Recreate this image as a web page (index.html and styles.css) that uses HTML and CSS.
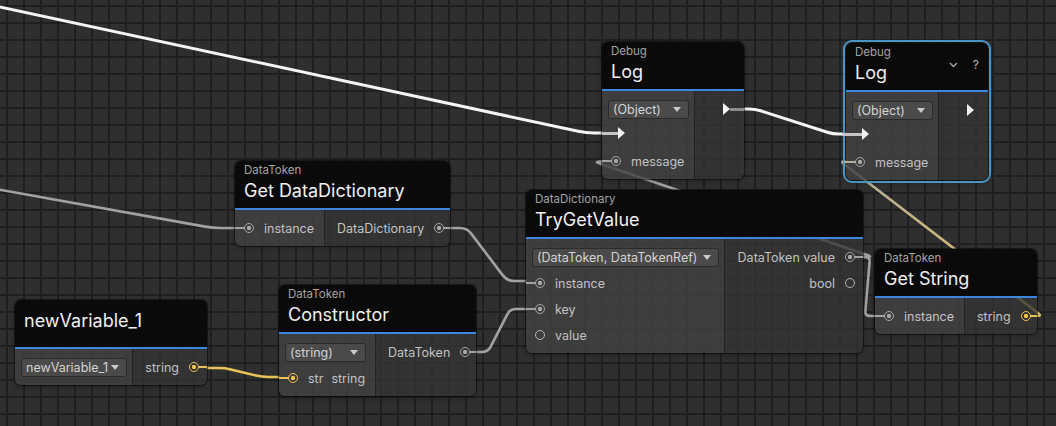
FILE: index.html
```html
<!DOCTYPE html>
<html>
<head>
<meta charset="utf-8">
<link rel="stylesheet" href="styles.css">
</head>
<body>
<div class="canvas">
  <svg class="wires" width="1056" height="426" viewBox="0 0 1056 426">
    <defs>
      <linearGradient id="tan" gradientUnits="userSpaceOnUse" x1="846" y1="161" x2="1042" y2="316">
        <stop offset="0" stop-color="#b1ae9c"/>
        <stop offset="1" stop-color="#e6c35e"/>
      </linearGradient>
    </defs>
    <path class="w-flow" d="M-4,6.1 L578.2,131.3 Q586,133 594,133 L602,133"/>
    <path class="w-flow" d="M744,109 L749,109 Q755,109 760.7,110.8 L827.3,132.2 Q833,134 839,134 L846,134"/>
    <path class="w-gray" d="M-4,189 L205.1,226.6 Q213,228 221,228 L235,228"/>
    <path class="w-gray" d="M450,228 L460,228 Q467,228 471.2,233.6 L502.8,275.4 Q507,281 514,281 L526,281"/>
    <path class="w-gray" d="M476,352 L482,352 Q488,352 490.7,346.7 L507.3,314.3 Q510,309 516,309 L526,309"/>
    <path class="w-yellow" d="M207,368 L219,368 Q225,368 230.8,369.4 L256.2,375.6 Q262,377 268,377 L279,377"/>
    <path class="w-gray" d="M863,257 L867,257 Q873,257 867.3,255.1 L599.7,163.4 Q594,161.5 600,161.5 L602,161.5"/>
    <path class="w-gray" d="M863,257 L865,257 Q870,257 869.6,262 L865.4,311 Q865,316 870,316 L875,316"/>
    <path class="w-tan" d="M846,161 Q840,161 844,164 L1038,313 Q1042,316 1037,316"/>
  </svg>

  <div class="node n-log1">
    <div class="hd">
      <div class="cat">Debug</div>
      <div class="title">Log</div>
    </div>
    <div class="bd">
      <div class="ins">
        <div class="row"><div class="dd dd-81">(Object)</div></div>
        <div class="row p"><span class="fl in ln"><i></i></span></div>
        <div class="row p"><span class="port ln"></span><span class="lbl">message</span></div>
      </div>
      <div class="outs">
        <div class="row"><span class="fl out ln"><i></i></span></div>
      </div>
    </div>
  </div>

  <div class="node n-log2 sel">
    <div class="hd ctl">
      <div class="hd-text">
        <div class="cat">Debug</div>
        <div class="title">Log</div>
      </div>
      <div class="tools">
        <svg class="chev" width="9" height="6" viewBox="0 0 9 6"><polyline points="1,1 4.5,4.5 8,1" fill="none" stroke="#a9a9a9" stroke-width="1.3"/></svg>
        <span class="help">?</span>
      </div>
    </div>
    <div class="bd">
      <div class="ins">
        <div class="row"><div class="dd dd-81">(Object)</div></div>
        <div class="row p"><span class="fl in ln"><i></i></span></div>
        <div class="row p"><span class="port ln tan"></span><span class="lbl">message</span></div>
      </div>
      <div class="outs">
        <div class="row"><span class="fl out"><i></i></span></div>
      </div>
    </div>
  </div>

  <div class="node n-getdict">
    <div class="hd">
      <div class="cat">DataToken</div>
      <div class="title">Get DataDictionary</div>
    </div>
    <div class="bd">
      <div class="ins">
        <div class="row p"><span class="port ln"></span><span class="lbl">instance</span></div>
      </div>
      <div class="outs">
        <div class="row"><span class="lbl">DataDictionary</span><span class="port ln"></span></div>
      </div>
    </div>
  </div>

  <div class="node n-try">
    <div class="hd">
      <div class="cat">DataDictionary</div>
      <div class="title">TryGetValue</div>
    </div>
    <div class="bd">
      <div class="ins">
        <div class="row"><div class="dd dd-187">(DataToken, DataTokenRef)</div></div>
        <div class="row p"><span class="port ln"></span><span class="lbl">instance</span></div>
        <div class="row p"><span class="port ln"></span><span class="lbl">key</span></div>
        <div class="row p"><span class="port empty"></span><span class="lbl">value</span></div>
      </div>
      <div class="outs">
        <div class="row"><span class="lbl">DataToken value</span><span class="port ln"></span></div>
        <div class="row"><span class="lbl">bool</span><span class="port empty"></span></div>
      </div>
    </div>
  </div>

  <div class="node n-getstr">
    <div class="hd">
      <div class="cat">DataToken</div>
      <div class="title">Get String</div>
    </div>
    <div class="bd">
      <div class="ins">
        <div class="row p"><span class="port ln"></span><span class="lbl">instance</span></div>
      </div>
      <div class="outs">
        <div class="row"><span class="lbl">string</span><span class="port y ln"></span></div>
      </div>
    </div>
  </div>

  <div class="node n-newvar">
    <div class="hd solo">
      <div class="title">newVariable_1</div>
    </div>
    <div class="bd">
      <div class="ins">
        <div class="row"><div class="dd dd-106">newVariable_1</div></div>
      </div>
      <div class="outs">
        <div class="row"><span class="lbl">string</span><span class="port y ln"></span></div>
      </div>
    </div>
  </div>

  <div class="node n-ctor">
    <div class="hd">
      <div class="cat">DataToken</div>
      <div class="title">Constructor</div>
    </div>
    <div class="bd">
      <div class="ins">
        <div class="row"><div class="dd dd-81">(string)</div></div>
        <div class="row p"><span class="port y ln"></span><span class="lbl str">str</span><span class="lbl">string</span></div>
      </div>
      <div class="outs">
        <div class="row"><span class="lbl">DataToken</span><span class="port ln"></span></div>
      </div>
    </div>
  </div>
</div>
</body>
</html>
```

FILE: styles.css
```css
html, body {
  margin: 0;
  padding: 0;
  background: #2e2e2e;
}

body {
  font-family: Inter, "Noto Sans", "Liberation Sans", sans-serif;
}

.canvas {
  position: relative;
  width: 1056px;
  height: 426px;
  overflow: hidden;
  background-color: #2f2f2f;
  background-image:
    linear-gradient(90deg, #1f1f1f 2px, transparent 2px),
    linear-gradient(180deg, #1f1f1f 2px, transparent 2px);
  background-size: 17px 17px;
  background-position: 6px 5px;
}

.wires {
  position: absolute;
  left: 0;
  top: 0;
}

.wires path {
  fill: none;
  stroke-linecap: round;
  stroke-linejoin: round;
}

.w-flow { stroke: #f4f4f4; stroke-width: 3; }
.w-gray { stroke: #a2a2a2; stroke-width: 2.6; }
.w-yellow { stroke: #e8c35a; stroke-width: 2.6; }
.w-tan { stroke: url(#tan); stroke-width: 2.6; }

/* nodes */
.node {
  position: absolute;
  border-radius: 6px;
  overflow: hidden;
  box-shadow: 0 0 0 1px rgba(0, 0, 0, 0.45), 0 2px 5px rgba(0, 0, 0, 0.3);
}

.n-log1 { left: 602px; top: 42px; width: 142px; }
.n-log2 { left: 846px; top: 43px; width: 142px; }
.n-getdict { left: 235px; top: 161px; width: 215px; }
.n-try { left: 526px; top: 190px; width: 337px; }
.n-getstr { left: 875px; top: 249px; width: 162px; }
.n-newvar { left: 15px; top: 300px; width: 192px; }
.n-ctor { left: 279px; top: 285px; width: 197px; }

.sel {
  overflow: visible;
  outline: 2px solid #4a94c2;
  outline-offset: 1px;
}

.sel .hd { border-radius: 6px 6px 0 0; }
.sel .ins { border-bottom-left-radius: 6px; }
.sel .outs { border-bottom-right-radius: 6px; }

.hd {
  box-sizing: border-box;
  height: 49px;
  padding: 3px 9px 0 9px;
  background: #0a0a0a;
  border-bottom: 2px solid #3b87de;
}

.hd.solo { padding-top: 7px; }

.hd.ctl {
  display: flex;
  align-items: flex-start;
}

.hd-text { flex: 1; }

.tools {
  display: flex;
  align-items: center;
  gap: 15px;
  height: 14px;
  margin-top: 12px;
}

.chev { display: block; }

.help {
  font-size: 12px;
  line-height: 14px;
  color: #b4b4b4;
}

.cat {
  font-size: 11.5px;
  line-height: 13px;
  color: #a4a4a4;
  white-space: nowrap;
}

.title {
  font-size: 18px;
  line-height: 28px;
  color: #efefef;
  white-space: nowrap;
}

.bd { display: flex; }

.ins {
  flex: none;
  padding: 5px 5px 5px 6px;
  background: rgba(66, 66, 66, 0.82);
}

.outs {
  flex: 1;
  padding: 5px 8px 5px 12px;
  background: rgba(52, 52, 52, 0.78);
  border-left: 1px solid rgba(28, 28, 28, 0.7);
  display: flex;
  flex-direction: column;
  align-items: flex-end;
}

.row {
  height: 26px;
  display: flex;
  align-items: center;
}

.ins .row.p { padding: 0 5px 0 3px; }

.lbl {
  font-size: 12.5px;
  color: #c2c2c2;
  white-space: nowrap;
}

.lbl.str { margin-right: 8px; }

/* ports */
.port {
  position: relative;
  flex: none;
  box-sizing: border-box;
  width: 10px;
  height: 10px;
  border-radius: 50%;
  border: 1.5px solid #a8a8a8;
  background: radial-gradient(circle, #a8a8a8 0 1.9px, transparent 2.5px);
  color: #a2a2a2;
}

.ins .port { margin-right: 10px; }
.outs .port { margin-left: 10px; }

.port.empty { background: none; border-color: #b4b4b4; }

.port.y {
  border-color: #ecc14f;
  background: radial-gradient(circle, #ecc14f 0 1.9px, transparent 2.5px);
  color: #e8c35a;
}

.port.tan { color: #b1ae9c; }

.ins .port.ln::before,
.outs .port.ln::after {
  content: "";
  position: absolute;
  top: calc(50% - 1.3px);
  width: 12px;
  height: 2.6px;
  background: currentColor;
}

.ins .port.ln::before { right: 100%; }
.outs .port.ln::after { left: 100%; }

/* flow arrows */
.fl {
  position: relative;
  display: flex;
}

.fl i {
  display: block;
  width: 7px;
  height: 12px;
  background: #f2f2f2;
  clip-path: polygon(0 0, 100% 50%, 0 100%);
}

.fl.in { margin-left: 7px; margin-top: -4px; }
.fl.out { margin-right: 6px; }

.fl.in.ln::before {
  content: "";
  position: absolute;
  right: 100%;
  top: 4.5px;
  width: 20px;
  height: 3px;
  background: #c6c6c6;
}

.fl.out.ln::after {
  content: "";
  position: absolute;
  left: 100%;
  top: 4.5px;
  width: 20px;
  height: 3px;
  background: #8e8e8e;
}

/* dropdowns */
.dd {
  box-sizing: border-box;
  height: 19px;
  display: flex;
  align-items: center;
  justify-content: space-between;
  padding: 0 7px 0 4px;
  border: 1px solid #2b2b2b;
  border-radius: 3px;
  background: #4a4a4a;
  color: #d4d4d4;
  font-size: 12.5px;
  white-space: nowrap;
}

.dd::after {
  content: "";
  flex: none;
  width: 0;
  height: 0;
  border-left: 4px solid transparent;
  border-right: 4px solid transparent;
  border-top: 5px solid #cacaca;
}

.dd-81 { width: 81px; }
.dd-106 { width: 106px; }
.dd-187 { width: 187px; }
```
